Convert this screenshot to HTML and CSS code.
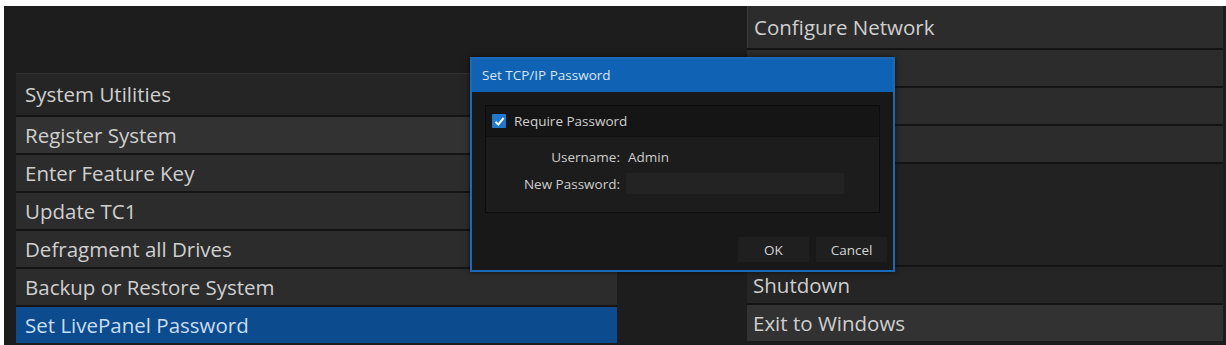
FILE: index.html
```html
<!DOCTYPE html>
<html lang="en">
<head>
    <meta charset="UTF-8">
    <title>Administrator Options</title>
    <link rel="stylesheet" href="styles.css">
</head>
<body>
    <div class="screen">
        <div class="left">
            <div class="item dim">System Utilities</div>
            <div class="item light">Register System</div>
            <div class="item">Enter Feature Key</div>
            <div class="item">Update TC1</div>
            <div class="item">Defragment all Drives</div>
            <div class="item">Backup or Restore System</div>
            <div class="item selected">Set LivePanel Password</div>
        </div>

        <div class="right">
            <div class="item first">Configure Network</div>
            <div class="item"></div>
            <div class="item"></div>
            <div class="item"></div>
            <div class="spacer"></div>
            <div class="item dim">Shutdown</div>
            <div class="item light">Exit to Windows</div>
        </div>

        <div class="dialog">
            <div class="dialog-title">Set TCP/IP Password</div>
            <div class="dialog-body">
                <div class="group">
                    <div class="check-row">
                        <span class="checkbox">
                            <svg width="11" height="11" viewBox="0 0 11 11"><path d="M1.5 5.8 L4.3 8.6 L9.6 2" fill="none" stroke="#fff" stroke-width="2"/></svg>
                        </span>
                        Require Password
                    </div>
                    <div class="form">
                        <span class="label">Username:</span>
                        <span class="value">Admin</span>
                        <span class="label">New Password:</span>
                        <span class="field"></span>
                    </div>
                </div>
                <div class="buttons">
                    <button class="btn">OK</button>
                    <button class="btn">Cancel</button>
                </div>
            </div>
        </div>
    </div>
</body>
</html>
```

FILE: styles.css
```css
body {
    margin: 0;
    background: #fff;
    overflow: hidden;
    font-family: 'Open Sans', 'Noto Sans', sans-serif;
}

.screen {
    position: relative;
    display: flex;
    margin: 6px 0 0 4px;
    height: 339px;
    background: #1d1d1d;
}

.left {
    width: 601px;
    padding: 67px 0 0 12px;
}

.right {
    flex: 1;
    display: flex;
    flex-direction: column;
    margin: 0 3px 0 130px;
    padding-bottom: 4px;
}

.spacer {
    flex: 1;
    background: #222;
    border-top: 2px solid #141414;
}

.item {
    height: 36px;
    line-height: 36px;
    border-top: 2px solid #141414;
    background: #2c2c2c;
    color: #cfcfcf;
    font-size: 20.5px;
    padding-left: 9px;
    white-space: nowrap;
}

.left .item:first-child {
    height: 41px;
    line-height: 41px;
    border-top: 1px solid #333;
}

.right .first {
    height: 42px;
    line-height: 42px;
    border-top: none;
    border-left: 1px solid #3a3a3a;
}

.right .item { padding-left: 6px; }

.item.dim { background: #252525; }
.item.light { background: #323232; }

.item.selected {
    background: #0b4b8e;
    color: #c8def5;
}

/* password dialog */
.dialog {
    position: absolute;
    left: 466px;
    top: 51px;
    width: 421px;
    height: 211px;
    border: 2px solid #1a6ab8;
    background: #181818;
    display: flex;
    flex-direction: column;
    box-shadow: 0 0 6px rgba(0, 0, 0, 0.6);
}

.dialog-title {
    height: 33px;
    line-height: 33px;
    background: #0f62b4;
    color: #d8e6f5;
    font-size: 13.5px;
    padding-left: 10px;
}

.dialog-body {
    flex: 1;
    padding: 13px 6px 0 13px;
}

.group {
    width: 393px;
    height: 106px;
    border: 1px solid #0c0c0c;
    background: #1c1c1c;
}

.check-row {
    height: 30px;
    display: flex;
    align-items: center;
    gap: 8px;
    padding-left: 6px;
    background: #151515;
    border-bottom: 1px solid #111;
    color: #d0d0d0;
    font-size: 13.5px;
}

.checkbox {
    width: 14px;
    height: 14px;
    background: #1d7ad0;
    border-radius: 1px;
    display: flex;
    align-items: center;
    justify-content: center;
}

.form {
    display: grid;
    grid-template-columns: 134px 218px;
    column-gap: 6px;
    row-gap: 7px;
    align-items: center;
    padding-top: 11px;
    font-size: 13.5px;
    color: #cdcdcd;
}

.label { text-align: right; }

.value { padding-left: 2px; }

.field {
    height: 21px;
    background: #232323;
}

.buttons {
    display: flex;
    justify-content: flex-end;
    gap: 7px;
    margin-top: 24px;
}

.btn {
    width: 71px;
    height: 25px;
    border: none;
    background: #1f1f1f;
    color: #d4d4d4;
    font-family: inherit;
    font-size: 13.5px;
    padding: 0;
}
```
